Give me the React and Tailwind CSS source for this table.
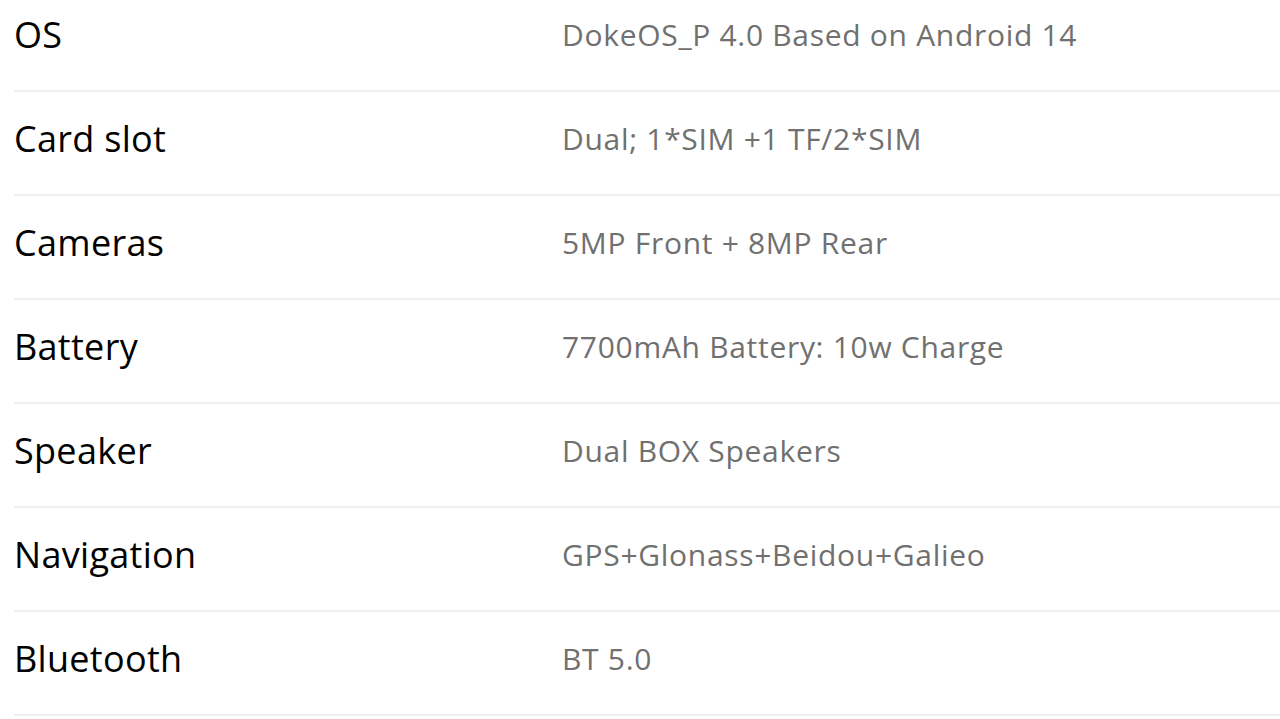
const specs = [
  { label: "OS", value: "DokeOS_P 4.0 Based on Android 14" },
  { label: "Card slot", value: "Dual; 1*SIM +1 TF/2*SIM" },
  { label: "Cameras", value: "5MP Front + 8MP Rear" },
  { label: "Battery", value: "7700mAh Battery: 10w Charge" },
  { label: "Speaker", value: "Dual BOX Speakers" },
  { label: "Navigation", value: "GPS+Glonass+Beidou+Galieo" },
  { label: "Bluetooth", value: "BT 5.0" },
];

export default function App() {
  return (
    <div className="h-[719px] w-[1280px] overflow-hidden bg-white font-['Open_Sans',sans-serif]">
      <div className="-mt-[12px] ml-[14px]">
        {specs.map((row) => (
          <div key={row.label} className="flex h-[104px] items-center border-b-2 border-[#efefef] pb-[8px]">
            <div className="w-[548px] shrink-0 text-[36px] leading-none tracking-[0.3px] text-black">{row.label}</div>
            <div className="text-[30px] leading-none tracking-[0.7px] text-[#707070]">{row.value}</div>
          </div>
        ))}
      </div>
    </div>
  );
}
